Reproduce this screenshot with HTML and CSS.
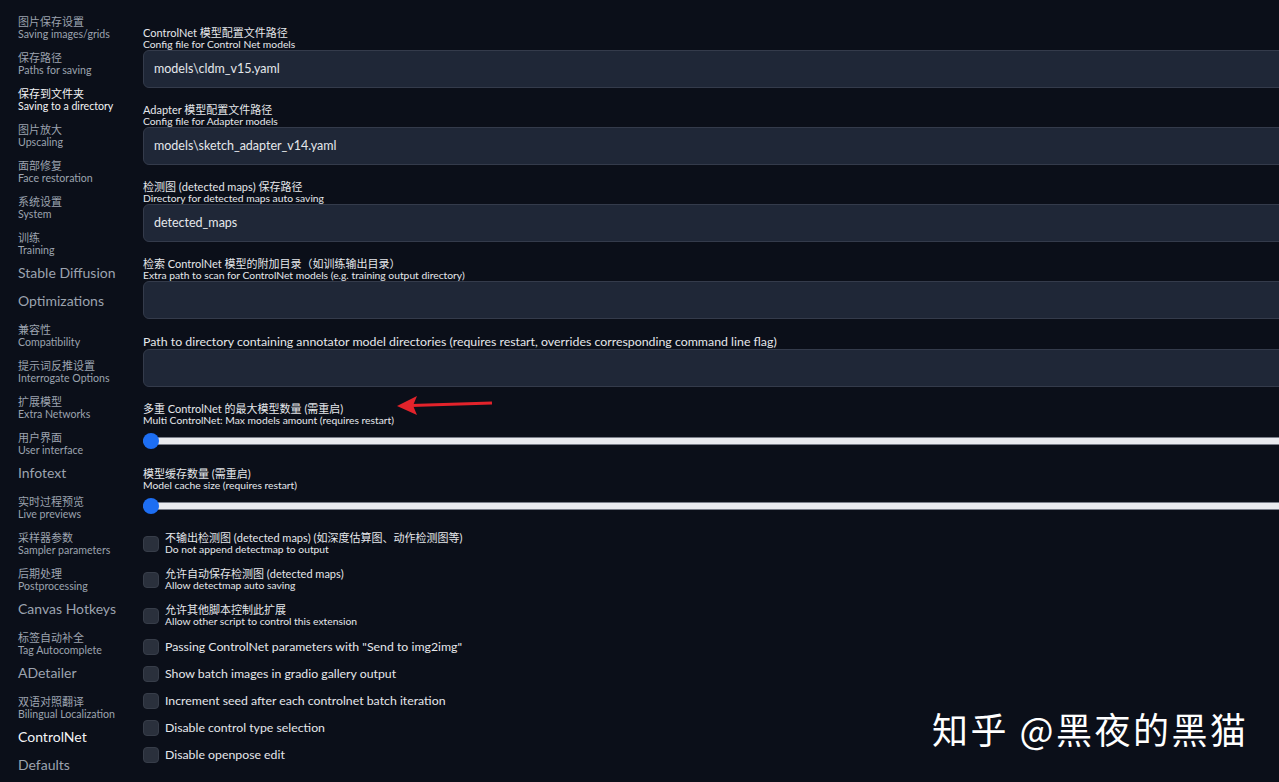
FILE: index.html
```html
<!DOCTYPE html>
<html>
<head>
    <title>Settings - ControlNet</title>
    <link rel="stylesheet" href="styles.css">
</head>
<body>
    <div class="page">
        <nav class="sidebar">
            <div class="nav-item"><span class="zh">图片保存设置</span><span class="en">Saving images/grids</span></div>
            <div class="nav-item"><span class="zh">保存路径</span><span class="en">Paths for saving</span></div>
            <div class="nav-item active"><span class="zh">保存到文件夹</span><span class="en">Saving to a directory</span></div>
            <div class="nav-item"><span class="zh">图片放大</span><span class="en">Upscaling</span></div>
            <div class="nav-item"><span class="zh">面部修复</span><span class="en">Face restoration</span></div>
            <div class="nav-item"><span class="zh">系统设置</span><span class="en">System</span></div>
            <div class="nav-item"><span class="zh">训练</span><span class="en">Training</span></div>
            <div class="nav-item single">Stable Diffusion</div>
            <div class="nav-item single">Optimizations</div>
            <div class="nav-item"><span class="zh">兼容性</span><span class="en">Compatibility</span></div>
            <div class="nav-item"><span class="zh">提示词反推设置</span><span class="en">Interrogate Options</span></div>
            <div class="nav-item"><span class="zh">扩展模型</span><span class="en">Extra Networks</span></div>
            <div class="nav-item"><span class="zh">用户界面</span><span class="en">User interface</span></div>
            <div class="nav-item single">Infotext</div>
            <div class="nav-item"><span class="zh">实时过程预览</span><span class="en">Live previews</span></div>
            <div class="nav-item"><span class="zh">采样器参数</span><span class="en">Sampler parameters</span></div>
            <div class="nav-item"><span class="zh">后期处理</span><span class="en">Postprocessing</span></div>
            <div class="nav-item single">Canvas Hotkeys</div>
            <div class="nav-item"><span class="zh">标签自动补全</span><span class="en">Tag Autocomplete</span></div>
            <div class="nav-item single">ADetailer</div>
            <div class="nav-item"><span class="zh">双语对照翻译</span><span class="en">Bilingual Localization</span></div>
            <div class="nav-item single active">ControlNet</div>
            <div class="nav-item single">Defaults</div>
        </nav>

        <main class="settings">
            <div class="field">
                <label class="field-label"><span class="zh">ControlNet 模型配置文件路径</span><span class="en">Config file for Control Net models</span></label>
                <div class="textbox">models\cldm_v15.yaml</div>
            </div>
            <div class="field">
                <label class="field-label"><span class="zh">Adapter 模型配置文件路径</span><span class="en">Config file for Adapter models</span></label>
                <div class="textbox">models\sketch_adapter_v14.yaml</div>
            </div>
            <div class="field">
                <label class="field-label"><span class="zh">检测图 (detected maps) 保存路径</span><span class="en">Directory for detected maps auto saving</span></label>
                <div class="textbox">detected_maps</div>
            </div>
            <div class="field">
                <label class="field-label"><span class="zh">检索 ControlNet 模型的附加目录（如训练输出目录）</span><span class="en">Extra path to scan for ControlNet models (e.g. training output directory)</span></label>
                <div class="textbox"></div>
            </div>
            <div class="field">
                <label class="field-label single">Path to directory containing annotator model directories (requires restart, overrides corresponding command line flag)</label>
                <div class="textbox"></div>
            </div>
            <div class="field">
                <label class="field-label"><span class="zh">多重 ControlNet 的最大模型数量 (需重启)</span><span class="en">Multi ControlNet: Max models amount (requires restart)</span></label>
                <div class="slider"><div class="slider-track"></div><div class="slider-thumb"></div></div>
            </div>
            <div class="field">
                <label class="field-label"><span class="zh">模型缓存数量 (需重启)</span><span class="en">Model cache size (requires restart)</span></label>
                <div class="slider"><div class="slider-track"></div><div class="slider-thumb"></div></div>
            </div>

            <div class="checks">
                <label class="check"><span class="box"></span><span class="check-text"><span class="zh">不输出检测图 (detected maps) (如深度估算图、动作检测图等)</span><span class="en">Do not append detectmap to output</span></span></label>
                <label class="check"><span class="box"></span><span class="check-text"><span class="zh">允许自动保存检测图 (detected maps)</span><span class="en">Allow detectmap auto saving</span></span></label>
                <label class="check"><span class="box"></span><span class="check-text"><span class="zh">允许其他脚本控制此扩展</span><span class="en">Allow other script to control this extension</span></span></label>
                <label class="check single"><span class="box"></span><span class="check-text">Passing ControlNet parameters with "Send to img2img"</span></label>
                <label class="check single"><span class="box"></span><span class="check-text">Show batch images in gradio gallery output</span></label>
                <label class="check single"><span class="box"></span><span class="check-text">Increment seed after each controlnet batch iteration</span></label>
                <label class="check single"><span class="box"></span><span class="check-text">Disable control type selection</span></label>
                <label class="check single"><span class="box"></span><span class="check-text">Disable openpose edit</span></label>
            </div>
        </main>
    </div>

    <!-- annotation arrow drawn over the screenshot -->
    <svg class="arrow" width="110" height="30" viewBox="0 0 110 30">
        <line x1="97" y1="10" x2="16" y2="12.5" stroke="#e3232b" stroke-width="3"/>
        <polygon points="2,13 22,3 18,12.5 22,22" fill="#e3232b"/>
    </svg>

    <div class="watermark">知乎 @黑夜的黑猫</div>
</body>
</html>
```

FILE: styles.css
```css
body {
    margin: 0;
    background-color: #0b0f19;
    color: #e5e7eb;
    font-family: Lato, "Noto Sans CJK SC", sans-serif;
    overflow: hidden;
    height: 782px;
}

.page {
    display: flex;
    width: 1310px;
}

/* left settings menu */
.sidebar {
    flex: 0 0 125px;
    padding: 7px 0 0 18px;
    display: flex;
    flex-direction: column;
}

.nav-item {
    height: 36px;
    box-sizing: border-box;
    padding-top: 8px;
    display: flex;
    flex-direction: column;
    color: #9ca3af;
    white-space: nowrap;
}

.nav-item .zh {
    font-size: 11px;
    line-height: 13px;
}

.nav-item .en {
    font-size: 10.6px;
    line-height: 12px;
}

.nav-item.single {
    height: 28px;
    padding-top: 0;
    font-size: 14px;
    line-height: 28px;
}

.nav-item.active {
    color: #f3f4f6;
}

/* main column */
.settings {
    flex: 1;
    padding-top: 27px;
    display: flex;
    flex-direction: column;
    gap: 16px;
}

.field-label {
    display: flex;
    flex-direction: column;
    white-space: nowrap;
}

.field-label .zh,
.check-text .zh {
    font-size: 11px;
    line-height: 12px;
}

.field-label .en,
.check-text .en {
    font-size: 10.3px;
    line-height: 11px;
}

.field-label.single {
    font-size: 12.35px;
    line-height: 14px;
}

.textbox {
    height: 38px;
    box-sizing: border-box;
    background-color: #1f2737;
    border: 1px solid #343b4b;
    border-radius: 6px;
    padding-left: 10px;
    font-size: 12.5px;
    line-height: 36px;
    color: #e5e7eb;
}

.slider {
    position: relative;
    height: 22px;
    padding-top: 4px;
}

.slider-track {
    margin-top: 7px;
    height: 8px;
    box-sizing: border-box;
    background-color: #e9eaee;
    border: 1px solid #7b7f8a;
    border-radius: 4px;
}

.slider-thumb {
    position: absolute;
    left: 0;
    top: 7px;
    width: 16px;
    height: 16px;
    border-radius: 50%;
    background-color: #1d6ef3;
}

.checks {
    display: flex;
    flex-direction: column;
    gap: 11px;
    margin-top: -2px;
}

.check {
    display: flex;
    align-items: center;
    gap: 6px;
    height: 25px;
}

.check.single {
    height: 16px;
}

.box {
    flex: 0 0 14px;
    height: 14px;
    background-color: #2a303c;
    border: 1px solid #373d49;
    border-radius: 4px;
}

.check-text {
    display: flex;
    flex-direction: column;
    white-space: nowrap;
}

.check.single .check-text {
    font-size: 12.3px;
    line-height: 14px;
}

.arrow {
    position: absolute;
    left: 395px;
    top: 393px;
}

.watermark {
    position: absolute;
    left: 932px;
    top: 706px;
    font-family: "Noto Sans CJK SC", sans-serif;
    font-size: 36px;
    line-height: 44px;
    color: #ffffff;
    letter-spacing: 2.5px;
}
```
